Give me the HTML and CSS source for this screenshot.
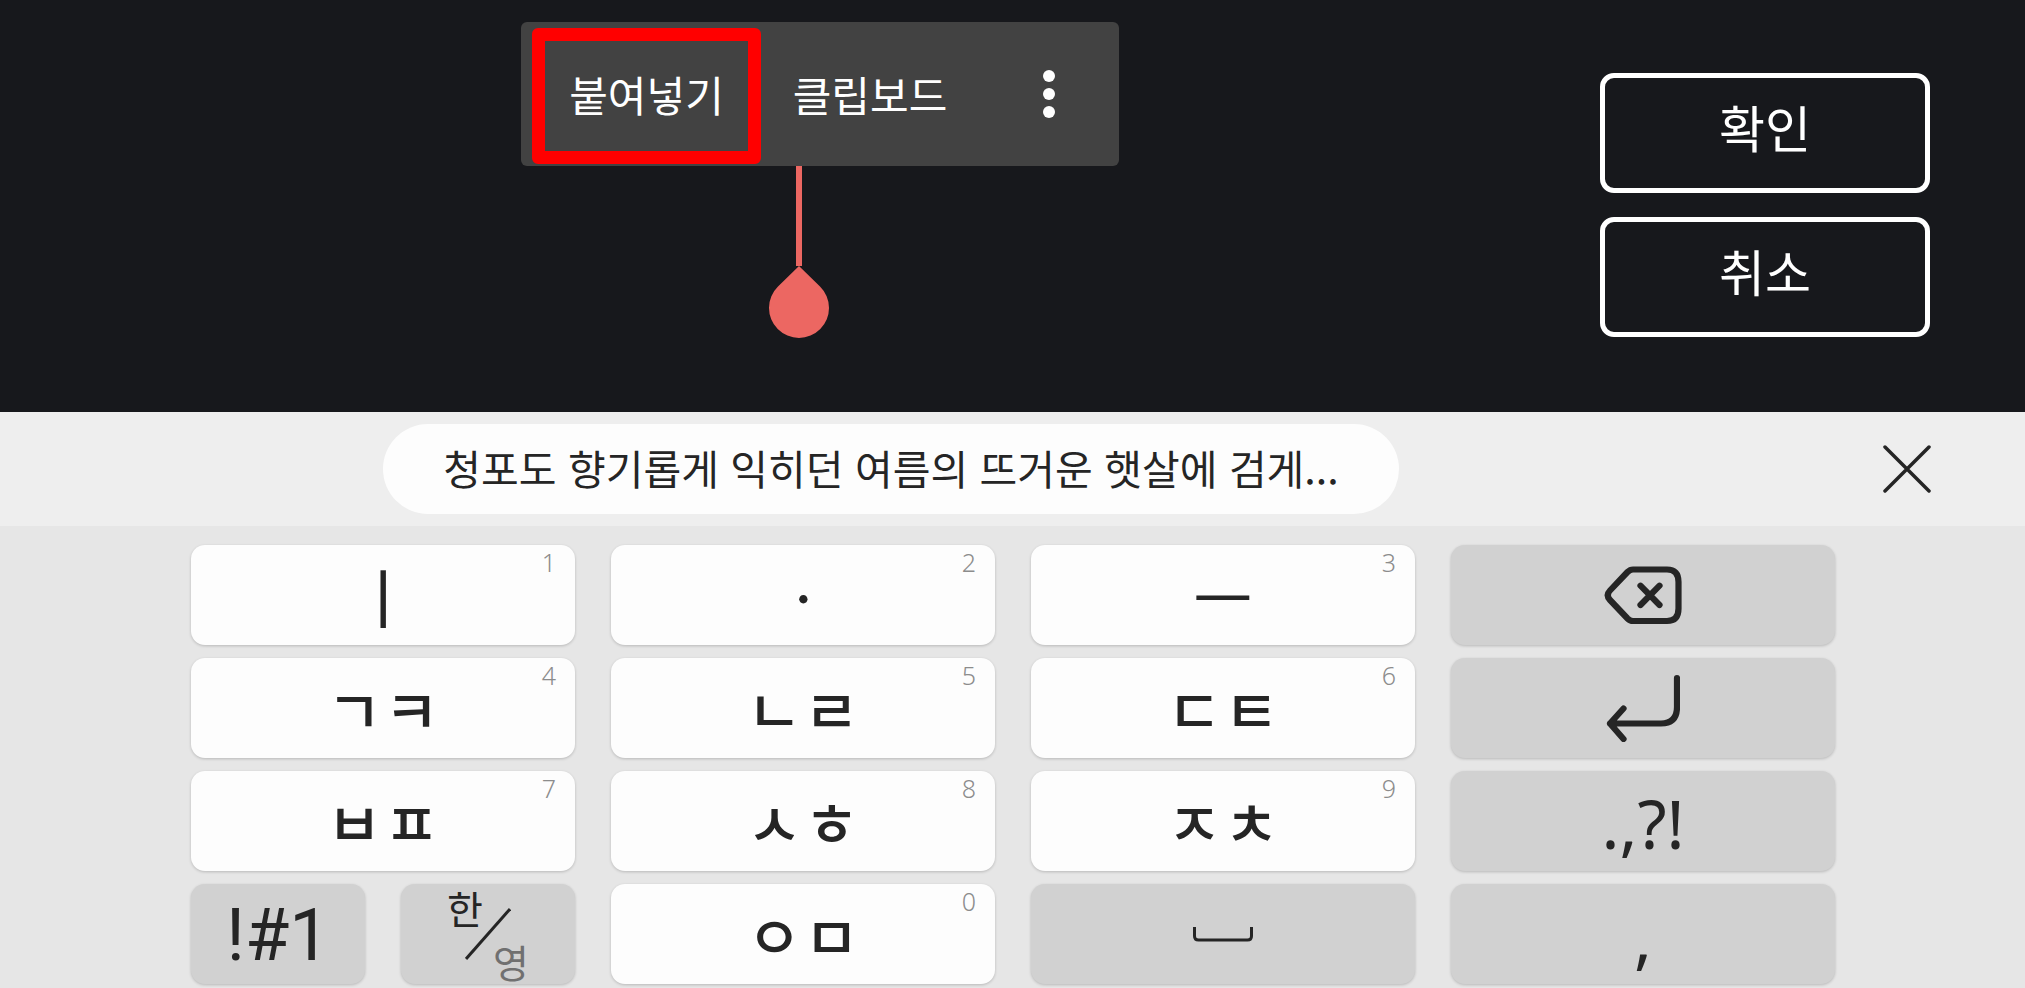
FILE: index.html
```html
<!DOCTYPE html>
<html lang="ko">
<head>
    <meta charset="UTF-8">
    <meta name="viewport" content="width=device-width, initial-scale=1.0">
    <title>붙여넣기</title>
    <link rel="stylesheet" href="styles.css">
</head>
<body>
    <main class="editor">
        <div class="paste-menu">
            <button class="menu-item highlight" type="button">붙여넣기</button>
            <button class="menu-item" type="button">클립보드</button>
            <button class="menu-more" type="button" aria-label="더보기">
                <svg width="12" height="48" viewBox="0 0 12 48" fill="#fff">
                    <circle cx="6" cy="6" r="6"/>
                    <circle cx="6" cy="24" r="6"/>
                    <circle cx="6" cy="42" r="6"/>
                </svg>
            </button>
        </div>
        <svg class="cursor" width="60" height="172" viewBox="0 0 60 172" fill="#ec6762">
            <rect x="27" y="0" width="6" height="100"/>
            <path d="M30 100 L51 120.500 A30 30 0 1 1 9 120.500 Z"/>
        </svg>
        <div class="actions">
            <button type="button">확인</button>
            <button type="button">취소</button>
        </div>
    </main>

    <div class="suggestions">
        <button class="clip" type="button">청포도 향기롭게 익히던 여름의 뜨거운 햇살에 검게...</button>
        <button class="close" type="button" aria-label="닫기">
            <svg width="48" height="48" viewBox="0 0 48 48" fill="none" stroke="#252525" stroke-width="3.500" stroke-linecap="round">
                <path d="M2 2 L46 46 M46 2 L2 46"/>
            </svg>
        </button>
    </div>

    <div class="keyboard">
        <button class="key vowel" type="button">ㅣ<small>1</small></button>
        <button class="key vowel" type="button">ㆍ<small>2</small></button>
        <button class="key vowel" type="button">ㅡ<small>3</small></button>
        <button class="key dark" type="button" aria-label="지우기">
            <svg width="78" height="60" viewBox="0 0 78 60" fill="none" stroke="#252525" stroke-width="6.200" stroke-linecap="round">
                <path d="M29 4.500 H63 Q74.500 4.500 74.500 17 V43.500 Q74.500 56 63 56 H29 Q26 56 23.500 53.500 L6 35 Q1.500 30.300 6 25.500 L23.500 7 Q26 4.500 29 4.500 Z"/>
                <path d="M36.500 20.700 L55.500 40 M55.500 20.700 L36.500 40"/>
            </svg>
        </button>

        <button class="key" type="button"><span>ㄱ</span><span>ㅋ</span><small>4</small></button>
        <button class="key" type="button"><span>ㄴ</span><span>ㄹ</span><small>5</small></button>
        <button class="key" type="button"><span>ㄷ</span><span>ㅌ</span><small>6</small></button>
        <button class="key dark" type="button" aria-label="줄바꿈">
            <svg width="74" height="68" viewBox="0 0 74 68" fill="none" stroke="#252525" stroke-width="6.200" stroke-linecap="round" stroke-linejoin="round">
                <path d="M71 4 V33 Q71 49.500 55 49.500 H4 M17.500 34.500 L4 49.500 L17.500 65"/>
            </svg>
        </button>

        <button class="key" type="button"><span>ㅂ</span><span>ㅍ</span><small>7</small></button>
        <button class="key" type="button"><span>ㅅ</span><span>ㅎ</span><small>8</small></button>
        <button class="key" type="button"><span>ㅈ</span><span>ㅊ</span><small>9</small></button>
        <button class="key dark marks" type="button">.,?!</button>

        <div class="split">
            <button class="key dark symbols" type="button">!#1</button>
            <button class="key dark" type="button">
                <span class="lang">
                    <span class="ko">한</span>
                    <svg width="46" height="52" viewBox="0 0 46 52" stroke="#252525" stroke-width="3">
                        <path d="M1 51 L45 1"/>
                    </svg>
                    <span class="en">영</span>
                </span>
            </button>
        </div>
        <button class="key" type="button"><span>ㅇ</span><span>ㅁ</span><small>0</small></button>
        <button class="key dark" type="button" aria-label="스페이스">
            <svg width="60" height="15" viewBox="0 0 60 15" fill="none" stroke="#252525" stroke-width="3">
                <path d="M1.500 0 V9 Q1.500 13 5.500 13 H54.500 Q58.500 13 58.500 9 V0"/>
            </svg>
        </button>
        <button class="key dark marks" type="button">,</button>
    </div>
</body>
</html>
```
FILE: styles.css
```css
* {
    box-sizing: border-box;
}
body {
    margin: 0;
    background-color: #e6e6e6;
    color: #252525;
    font-family: "Noto Sans CJK KR", sans-serif;
}
button {
    margin: 0;
    padding: 0;
    border: none;
    background: none;
    color: inherit;
    font-family: inherit;
    cursor: pointer;
}
svg {
    display: block;
}

/* editor */
.editor {
    position: relative;
    height: 412px;
    background-color: #17181c;
    color: #ffffff;
}
.paste-menu {
    position: absolute;
    top: 22px;
    left: 521px;
    display: flex;
    width: 598px;
    height: 144px;
    padding: 6px 0 2px 11px;
    border-radius: 6px;
    background-color: #424242;
}
.menu-item {
    width: 218px;
    padding-bottom: 6px;
    font-size: 42px;
}
.menu-item.highlight {
    width: 229px;
    border: 13px solid #ff0000;
    border-radius: 6px;
}
.menu-more {
    display: flex;
    flex: 1;
    align-items: center;
    justify-content: center;
    padding-bottom: 4px;
}
.cursor {
    position: absolute;
    top: 166px;
    left: 769px;
}
.actions {
    display: flex;
    flex-direction: column;
    align-items: flex-end;
    gap: 24px;
    padding: 73px 95px 0;
}
.actions button {
    width: 330px;
    height: 120px;
    padding-bottom: 14px;
    border: 5px solid #ffffff;
    border-radius: 14px;
    font-size: 50px;
}

/* clipboard suggestion */
.suggestions {
    display: flex;
    align-items: center;
    justify-content: space-between;
    height: 114px;
    padding: 0 94px 0 383px;
    background-color: #eeeeee;
}
.clip {
    width: 1016px;
    height: 90px;
    padding-bottom: 4px;
    border-radius: 45px;
    background-color: #fdfdfd;
    font-size: 41px;
    white-space: nowrap;
}

/* keys */
.keyboard {
    display: grid;
    grid-template-columns: repeat(4, 1fr);
    grid-auto-rows: 100px;
    gap: 13px 36px;
    padding: 19px 190px 4px 191px;
}
.key {
    position: relative;
    display: flex;
    align-items: center;
    justify-content: center;
    gap: 2px;
    border-radius: 14px;
    background-color: #fdfdfd;
    box-shadow: 0 1px 3px rgba(0, 0, 0, 0.2);
    font-size: 60px;
    font-weight: 500;
    line-height: 72px;
}
.key small {
    position: absolute;
    top: 5px;
    right: 19px;
    color: #8c8c8c;
    font-family: "Noto Sans", sans-serif;
    font-size: 25px;
    font-weight: 300;
    line-height: 24px;
}
.vowel {
    font-size: 65px;
    font-weight: 400;
}
.dark {
    background-color: #d1d1d1;
}
.marks {
    padding-top: 4px;
    font-family: "Noto Sans", sans-serif;
    font-size: 67px;
    font-weight: 400;
}
.split {
    display: grid;
    grid-template-columns: 1fr 1fr;
    gap: 36px;
}
.symbols {
    padding-top: 4px;
    font-family: Roboto, sans-serif;
    font-size: 72px;
    font-weight: 400;
}
.lang {
    display: grid;
    width: 82px;
    height: 92px;
    font-size: 39px;
    font-weight: 400;
    line-height: 38px;
}
.lang > * {
    grid-area: 1 / 1;
    place-self: center;
}
.lang .ko {
    place-self: start;
}
.lang .en {
    place-self: end;
    color: #707070;
}
```
